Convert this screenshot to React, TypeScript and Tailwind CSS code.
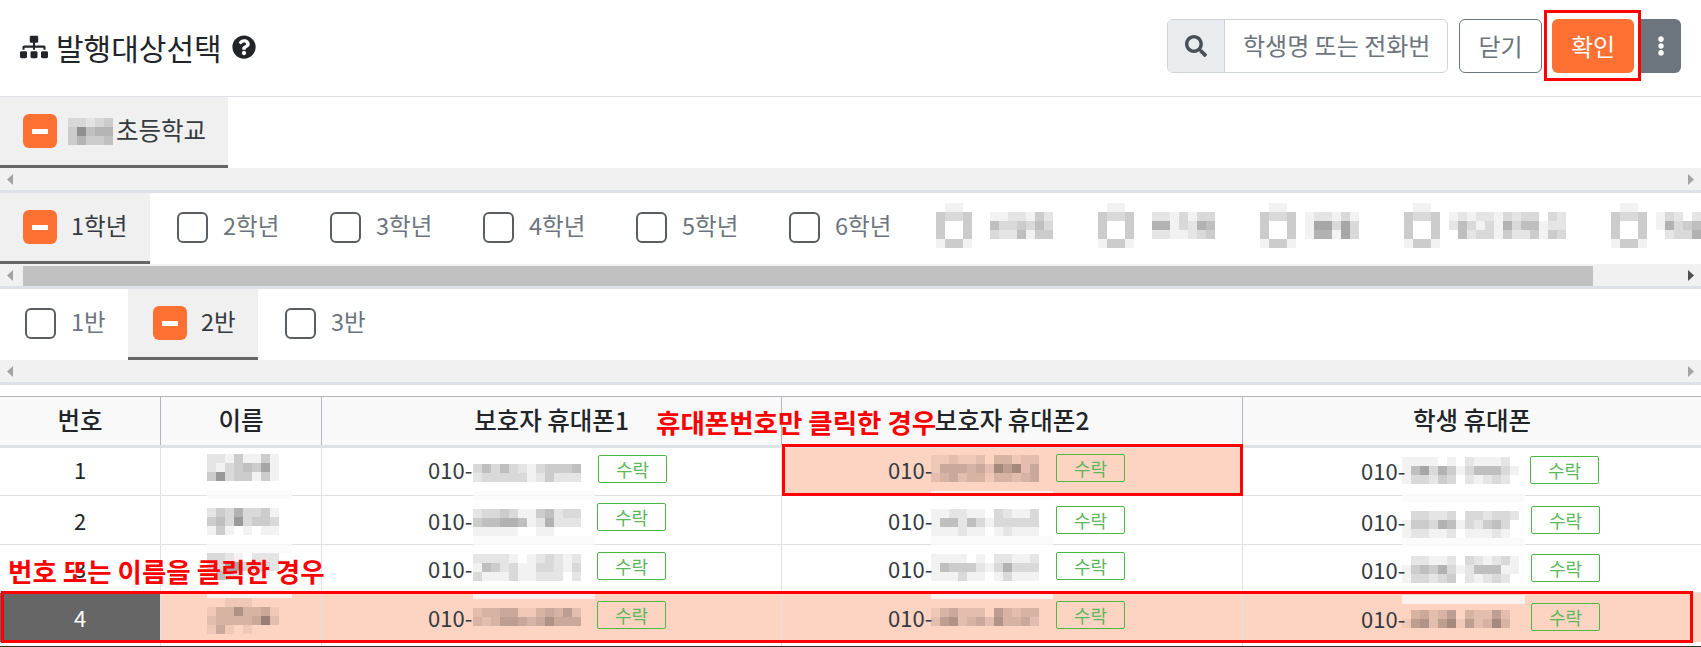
import { FaSitemap, FaQuestionCircle, FaSearch, FaEllipsisV } from "react-icons/fa"

// blurred text: each digit is how dark that 9px block is
function Mosaic({ rows, className = "" }: { rows: string[]; className?: string }) {
  return (
    <div className={`shrink-0 ${className}`}>
      {rows.map((r, i) => (
        <div key={i} className="flex">
          {r.split("").map((d, j) => (
            <div key={j} className="h-[9px] w-[9px]" style={{ backgroundColor: `rgba(0,0,0,${Number(d) * 0.05})` }} />
          ))}
        </div>
      ))}
    </div>
  )
}

function Checked() {
  return (
    <span className="flex h-[34px] w-[34px] shrink-0 items-center justify-center rounded-[6px] bg-[#ff7033]">
      <span className="h-[5px] w-[16px] bg-white" />
    </span>
  )
}

function Unchecked() {
  return <span className="h-[31px] w-[31px] shrink-0 rounded-[6px] border-[2.5px] border-[#5a5e63]" />
}

function ScrollBar() {
  return (
    <div className="flex h-[25px] shrink-0 items-center justify-between border-b-[3px] border-[#dee2e6] bg-[#f1f1f1]">
      <svg width="6" height="11" viewBox="0 0 6 11" className="ml-[7px] shrink-0">
        <polygon points="6,0 6,11 0,5.5" fill="#a3a3a3" />
      </svg>
      <svg width="6" height="11" viewBox="0 0 6 11" className="mr-[7px] shrink-0">
        <polygon points="0,0 0,11 6,5.5" fill="#a3a3a3" />
      </svg>
    </div>
  )
}

function ThumbBar() {
  return (
    <div className="flex h-[25px] shrink-0 items-end border-b-[3px] border-[#dee2e6] bg-[#f1f1f1]">
      <svg width="6" height="11" viewBox="0 0 6 11" className="mb-[5px] ml-[7px] shrink-0">
        <polygon points="6,0 6,11 0,5.5" fill="#a3a3a3" />
      </svg>
      <div className="ml-[10px] h-[20px] w-[1570px] shrink-0 bg-[#c1c1c1]" />
      <svg width="6" height="11" viewBox="0 0 6 11" className="mb-[5px] ml-auto mr-[7px] shrink-0">
        <polygon points="0,0 0,11 6,5.5" fill="#505050" />
      </svg>
    </div>
  )
}

const grades = ["2학년", "3학년", "4학년", "5학년", "6학년"]

const BOX = ["0110", "4334", "4004", "4004", "1441"]

const blurred = [
  { w: "w-[183px] pl-[21px]", label: ["01122142", "05334353", "03225144"] },
  { w: "w-[162px]", label: ["02213133", "06613265", "02211234"] },
  { w: "w-[144px]", label: ["122131", "177373", "166173"] },
  { w: "w-[207px]", label: ["1212213233032", "2531316355122", "0523314224143"] },
  { w: "w-[100px]", label: ["13202", "16345", "02336"] },
]

interface Cell {
  blur: string[]
  blurTop: string
  badgeTop: string
  badgeLeft: string
  barTop: string
}

interface Row {
  no: string
  name: string[]
  nameTop: string
  nameBar: string
  phones: Cell[]
}

const tableRows: Row[] = [
  {
    no: "1",
    name: ["22141141", "21345471", "48344141"],
    nameTop: "mt-[6px]",
    nameBar: "top-[42px]",
    phones: [
      { blur: ["353532134445", "233333124222"], blurTop: "mt-[16px]", badgeTop: "mt-[7px]", badgeLeft: "ml-[17px]", barTop: "top-[43px]" },
      { blur: ["112112033122", "144434275724", "234233133234"], blurTop: "mt-[7px]", badgeTop: "mt-[6px]", badgeLeft: "ml-[17px]", barTop: "top-[43px]" },
      { blur: ["1111010211120", "1573641355531", "1332430212320"], blurTop: "mt-[9px]", badgeTop: "mt-[8px]", badgeLeft: "ml-[11px]", barTop: "top-[45px]" },
    ],
  },
  {
    no: "2",
    name: ["24363341", "45383443", "14101011"],
    nameTop: "mt-[12px]",
    nameBar: "top-[48px]",
    phones: [
      { blur: ["233431145233", "455665126222", "111110011000"], blurTop: "mt-[13px]", badgeTop: "mt-[7px]", badgeLeft: "ml-[16px]", barTop: "top-[40px]" },
      { blur: ["112211032113", "155253133333", "111211012111"], blurTop: "mt-[13px]", badgeTop: "mt-[10px]", badgeLeft: "ml-[17px]", barTop: "top-[40px]" },
      { blur: ["0332230332332", "1443651324530", "1221120111210"], blurTop: "mt-[15px]", badgeTop: "mt-[10px]", badgeLeft: "ml-[12px]", barTop: "top-[42px]" },
    ],
  },
  {
    no: "3",
    name: ["33210222", "33773332", "15320110"],
    nameTop: "mt-[8px]",
    nameBar: "top-[44px]",
    phones: [
      { blur: ["222210123212", "154231133213", "311131122202"], blurTop: "mt-[9px]", badgeTop: "mt-[7px]", badgeLeft: "ml-[16px]", barTop: "top-[45px]" },
      { blur: ["111101022112", "154442136333", "111311013111"], blurTop: "mt-[9px]", badgeTop: "mt-[7px]", badgeLeft: "ml-[17px]", barTop: "top-[45px]" },
      { blur: ["0221120321231", "1454631255511", "1332340212320"], blurTop: "mt-[11px]", badgeTop: "mt-[9px]", badgeLeft: "ml-[12px]", barTop: "top-[50px]" },
    ],
  },
  {
    no: "4",
    name: ["00111000", "13363341", "23333482", "14101000"],
    nameTop: "mt-[5px]",
    nameBar: "hidden",
    phones: [
      { blur: ["233441134352", "323554346444"], blurTop: "mt-[15px]", badgeTop: "mt-[8px]", badgeLeft: "ml-[16px]", barTop: "hidden" },
      { blur: ["134222053233", "256234263342"], blurTop: "mt-[15px]", badgeTop: "mt-[8px]", badgeLeft: "ml-[17px]", barTop: "hidden" },
      { blur: ["0342350322520", "1562571523730"], blurTop: "mt-[17px]", badgeTop: "mt-[10px]", badgeLeft: "ml-[12px]", barTop: "hidden" },
    ],
  },
]

const colStart = ["pl-[106px]", "pl-[106px]", "pl-[118px]"]
const colText = ["w-[45px]", "w-[43px]", "w-[41px] pt-[2px]"]
const colBar = ["left-[151px] w-[122px]", "left-[149px] w-[122px]", "left-[159px] w-[123px]"]
const rowHeights = ["h-[48px]", "h-[49px]", "h-[48px]", "h-[49px]"]

export default function App() {
  return (
    <div className="relative h-[647px] w-[1701px] overflow-hidden bg-white font-['Noto_Sans_CJK_KR',sans-serif] text-[#212529]">
      {/* header */}
      <div className="flex h-[97px] items-start justify-between border-b border-[#dee2e6] pr-[20px]">
        <div className="flex h-[96px] items-center pl-[20px]">
          <FaSitemap size={28} className="mr-[8px] -translate-y-[1px]" />
          <span className="-translate-y-[1px] text-[30px] leading-none">발행대상선택</span>
          <FaQuestionCircle size={24} className="ml-[10px] -translate-y-[1px]" />
        </div>
        <div className="mt-[19px] flex h-[54px] items-stretch">
          <div className="flex w-[281px] overflow-hidden rounded-[6px] border border-[#ced4da]">
            <span className="flex w-[57px] shrink-0 items-center justify-center border-r border-[#ced4da] bg-[#e9ecef] text-[#495057]">
              <FaSearch size={22} />
            </span>
            <div className="min-w-0 flex-1 pl-[18px] pr-[18px]">
              <div className="overflow-hidden whitespace-nowrap text-[24px] leading-[50px] text-[#6c757d]">학생명 또는 전화번</div>
            </div>
          </div>
          <button className="ml-[11px] w-[83px] rounded-[6px] border border-[#6c757d] text-[24px] text-[#6c757d]">닫기</button>
          <button className="ml-[10px] w-[82px] rounded-[6px] bg-[#ff7033] text-[24px] text-white">확인</button>
          <button className="ml-[7px] flex w-[40px] items-center justify-center rounded-r-[6px] bg-[#6c757d] text-white">
            <FaEllipsisV size={20} />
          </button>
        </div>
      </div>

      {/* school */}
      <div className="flex h-[71px]">
        <div className="flex w-[228px] items-center border-b-[3px] border-[#666] bg-[#f0f0f0] pl-[23px]">
          <Checked />
          <Mosaic rows={["22123", "38455", "35334"]} className="ml-[11px]" />
          <span className="mb-[2px] ml-[3px] whitespace-nowrap text-[24.5px] leading-none text-[#343a40]">초등학교</span>
        </div>
      </div>
      <ScrollBar />

      {/* grade */}
      <div className="flex h-[71px] overflow-hidden">
        <div className="flex w-[150px] shrink-0 items-center border-b-[3px] border-[#666] bg-[#f0f0f0] pl-[23px]">
          <Checked />
          <span className="mb-[3px] ml-[14px] whitespace-nowrap text-[23.5px] leading-none text-[#343a40]">1학년</span>
        </div>
        {grades.map((g) => (
          <div key={g} className="flex w-[153px] shrink-0 items-center pb-[3px] pl-[27px]">
            <Unchecked />
            <span className="mb-[3px] ml-[15px] whitespace-nowrap text-[23.5px] leading-none text-[#6c757d]">{g}</span>
          </div>
        ))}
        {blurred.map((b, i) => (
          <div key={i} className={`flex shrink-0 items-start pt-[10px] ${b.w}`}>
            <Mosaic rows={BOX} />
            <Mosaic rows={b.label} className="ml-[9px] mt-[9px]" />
          </div>
        ))}
      </div>
      <ThumbBar />

      {/* class */}
      <div className="flex h-[71px]">
        <div className="flex w-[128px] items-center pb-[3px] pl-[25px]">
          <Unchecked />
          <span className="mb-[3px] ml-[15px] text-[23.5px] leading-none text-[#6c757d]">1반</span>
        </div>
        <div className="flex w-[130px] items-center border-b-[3px] border-[#666] bg-[#f0f0f0] pl-[25px]">
          <Checked />
          <span className="mb-[3px] ml-[14px] text-[23.5px] leading-none text-[#343a40]">2반</span>
        </div>
        <div className="flex w-[130px] items-center pb-[3px] pl-[27px]">
          <Unchecked />
          <span className="mb-[3px] ml-[15px] text-[23.5px] leading-none text-[#6c757d]">3반</span>
        </div>
      </div>
      <ScrollBar />

      {/* table */}
      <div className="mt-[11px]">
        <div className="grid h-[52px] grid-cols-[161px_161px_460px_461px_458px] border-y border-b-[3px] border-t-[#b5b5bd] border-b-[#dee2e6] bg-[#f9f9f9] text-center text-[24.5px] font-medium leading-[46px]">
          <div className="border-r border-[#b5b5bd]">번호</div>
          <div className="border-r border-[#b5b5bd]">이름</div>
          <div className="border-r border-[#b5b5bd]">보호자 휴대폰1</div>
          <div className="border-r border-[#b5b5bd]">보호자 휴대폰2</div>
          <div>학생 휴대폰</div>
        </div>
        {tableRows.map((row, r) => (
          <div key={row.no} className={`grid grid-cols-[161px_161px_460px_461px_458px] text-[22px] ${rowHeights[r]} ${r < 3 ? "border-b border-[#dee2e6]" : ""} ${r === 3 ? "bg-[#fdd3c1]" : ""}`}>
            <div className={`flex items-center justify-center border-r border-[#dee2e6] ${r === 0 ? "pb-[5px]" : ""} ${r === 3 ? "bg-[#666] text-white" : ""}`}>{row.no}</div>
            <div className="relative flex items-start border-r border-[#dee2e6] pl-[46px]">
              <Mosaic rows={row.name} className={row.nameTop} />
              <div className={`absolute left-[46px] z-10 h-[9px] w-[85px] bg-[#fafafa]/80 ${row.nameBar}`} />
            </div>
            {row.phones.map((p, c) => (
              <div key={c} className={`relative flex items-start ${colStart[c]} ${c < 2 ? "border-r border-[#dee2e6]" : ""} ${r === 0 && c === 1 ? "bg-[#fdd3c1]" : ""}`}>
                <span className={`flex h-full shrink-0 items-center whitespace-nowrap text-[#343a40] ${colText[c]} ${r === 0 ? "pb-[4px]" : ""}`}>010-</span>
                <Mosaic rows={p.blur} className={p.blurTop} />
                <span className={`flex h-[28px] w-[69px] shrink-0 items-center justify-center rounded-[2px] border border-[#4cb944] text-[18px] leading-none text-[#5cb85c] ${p.badgeTop} ${p.badgeLeft}`}>수락</span>
                <div className={`absolute z-10 h-[9px] bg-[#fafafa]/80 ${colBar[c]} ${p.barTop}`} />
              </div>
            ))}
          </div>
        ))}
        <div className="grid h-[5px] grid-cols-[161px_161px_460px_461px_458px] border-b border-[#333]">
          <div className="border-r border-[#dee2e6]" />
          <div className="border-r border-[#dee2e6]" />
          <div className="border-r border-[#dee2e6]" />
          <div className="border-r border-[#dee2e6]" />
          <div />
        </div>
      </div>

      {/* red guide marks drawn over the page */}
      <div className="absolute left-[1544px] top-[10px] z-20 h-[71px] w-[97px] border-[3px] border-[#ff0000]" />
      <div className="absolute left-[782px] top-[444px] z-20 h-[52px] w-[461px] border-[3px] border-[#ff0000]" />
      <div className="absolute left-[1px] top-[591px] z-20 h-[52px] w-[1692px] border-[3px] border-[#ff0000]" />
      <span className="absolute left-[656px] top-[406px] z-20 whitespace-nowrap text-[26.5px] font-bold leading-[32px] text-[#ff0000]">휴대폰번호만 클릭한 경우</span>
      <span className="absolute left-[8px] top-[555px] z-20 whitespace-nowrap text-[26.5px] font-bold leading-[32px] text-[#ff0000]">번호 또는 이름을 클릭한 경우</span>
    </div>
  )
}
